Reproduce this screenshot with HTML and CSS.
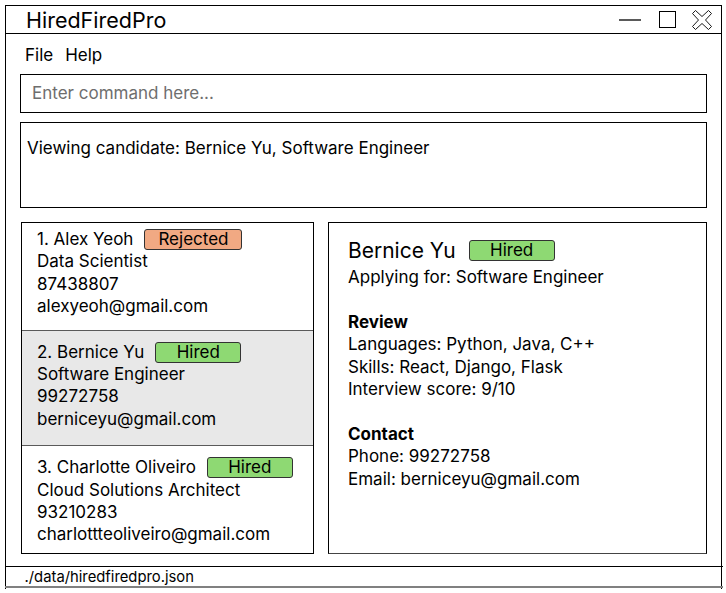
FILE: index.html
```html
<!DOCTYPE html>
<html lang="en">
<head>
<meta charset="utf-8">
<title>HiredFiredPro</title>
<link rel="stylesheet" href="styles.css">
</head>
<body>
<div class="window">
  <div class="titlebar">
    <span class="app-title">HiredFiredPro</span>
    <div class="controls">
      <svg class="ctl-min" width="22" height="2" viewBox="0 0 22 2"><line x1="0" y1="1" x2="22" y2="1" stroke="#000" stroke-width="1.3"/></svg>
      <svg class="ctl-max" width="17" height="17" viewBox="0 0 17 17"><rect x="0.5" y="0.5" width="16" height="16" fill="none" stroke="#000" stroke-width="1"/></svg>
      <svg class="ctl-close" width="20" height="20" viewBox="0 0 20 20"><polygon points="0.5,3.5 3.5,0.5 10,6.5 16.5,0.5 19.5,3.5 13.5,10 19.5,16.5 16.5,19.5 10,13.5 3.5,19.5 0.5,16.5 6.5,10" fill="none" stroke="#000" stroke-width="0.9" stroke-linejoin="round"/></svg>
    </div>
  </div>
  <div class="menubar">
    <span class="menu-item">File</span>
    <span class="menu-item">Help</span>
  </div>
  <div class="command">Enter command here...</div>
  <div class="result">Viewing candidate: Bernice Yu, Software Engineer</div>
  <div class="main">
    <div class="list">
      <div class="card">
        <div class="card-head"><span>1. Alex Yeoh</span><span class="badge rejected">Rejected</span></div>
        <div>Data Scientist</div>
        <div>87438807</div>
        <div>alexyeoh@gmail.com</div>
      </div>
      <div class="card selected">
        <div class="card-head"><span>2. Bernice Yu</span><span class="badge hired">Hired</span></div>
        <div>Software Engineer</div>
        <div>99272758</div>
        <div>berniceyu@gmail.com</div>
      </div>
      <div class="card">
        <div class="card-head"><span>3. Charlotte Oliveiro</span><span class="badge hired">Hired</span></div>
        <div>Cloud Solutions Architect</div>
        <div>93210283</div>
        <div>charlottteoliveiro@gmail.com</div>
      </div>
    </div>
    <div class="detail">
      <div class="detail-head"><span class="detail-name">Bernice Yu</span><span class="badge hired">Hired</span></div>
      <div>Applying for: Software Engineer</div>
      <div class="section-title">Review</div>
      <div>Languages: Python, Java, C++</div>
      <div>Skills: React, Django, Flask</div>
      <div>Interview score: 9/10</div>
      <div class="section-title">Contact</div>
      <div>Phone: 99272758</div>
      <div>Email: berniceyu@gmail.com</div>
    </div>
  </div>
  <div class="status">./data/hiredfiredpro.json</div>
</div>
</body>
</html>
```

FILE: styles.css
```css
* { box-sizing: border-box; }
html, body { margin: 0; padding: 0; background: #fff; }
body {
  font-family: Inter, "Noto Sans", "Liberation Sans", sans-serif;
  font-size: 17px;
  line-height: 22.4px;
  color: #000;
}
.window {
  margin: 5px 0 0 5px;
  width: 717px;
  height: 584px;
  border: 1.5px solid #000;
  border-bottom: none;
  display: flex;
  flex-direction: column;
}
.titlebar {
  height: 28px;
  border-bottom: 1.5px solid #000;
  display: flex;
  align-items: center;
  justify-content: space-between;
  padding: 0 9px 0 20px;
}
.app-title {
  font-size: 21.5px;
  line-height: 26px;
}
.controls {
  display: flex;
  align-items: center;
}
.ctl-min { margin-right: 18px; margin-top: 1px; }
.ctl-max { margin-right: 16px; }
.ctl-close { display: block; }
.menubar {
  height: 40px;
  display: flex;
  align-items: center;
  padding: 3px 0 0 19px;
  gap: 12px;
}
.command {
  margin: 0 14px 0 14px;
  height: 39px;
  border: 1.5px solid #000;
  display: flex;
  align-items: center;
  padding-left: 11px;
  color: #6e6e6e;
}
.result {
  margin: 9px 14px 0 14px;
  height: 86px;
  border: 1.5px solid #000;
  padding: 14px 6px 0 6px;
}
.main {
  margin-top: 14px;
  height: 332px;
  display: flex;
  gap: 14px;
  padding: 0 14px 0 15px;
}
.list {
  width: 293px;
  border: 1.5px solid #000;
  overflow: hidden;
}
.card {
  padding: 10px 14px 15px 15px;
  border-bottom: 1.5px solid #5a5a5a;
}
.card:first-child { padding-top: 5px; padding-bottom: 12px; }
.card.selected { background: #e8e8e8; }
.card-head {
  display: flex;
  align-items: center;
  gap: 11px;
}
.badge {
  display: inline-block;
  min-width: 86px;
  height: 21px;
  padding: 0 13px;
  border: 1px solid #333;
  border-radius: 3px;
  text-align: center;
  line-height: 19px;
  margin-top: 1px;
}
.badge.rejected { background: #f1a983; }
.badge.hired { background: #8ed973; }
.detail {
  flex: 1;
  border: 1.5px solid #000;
  border-bottom-color: #444;
  padding: 11px 18px 0 19px;
}
.detail-head {
  display: flex;
  align-items: center;
  gap: 13px;
  height: 32px;
}
.detail-name {
  font-size: 21px;
  line-height: 27px;
}
.section-title {
  font-weight: 700;
  margin-top: 22.4px;
}
.status {
  margin-top: 12px;
  height: 22px;
  border-top: 1.5px solid #000;
  border-bottom: 2px solid #808080;
  font-size: 14.8px;
  line-height: 20px;
  padding-left: 20px;
  margin-left: -1.5px;
  margin-right: -1.5px;
}
```
